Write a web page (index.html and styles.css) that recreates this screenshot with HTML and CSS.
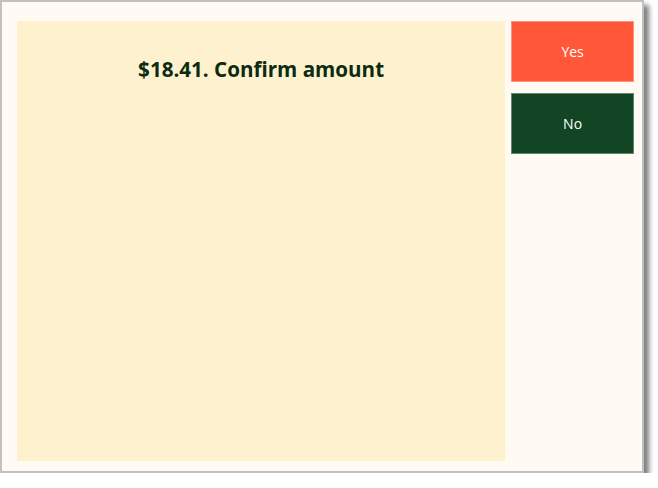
FILE: index.html
```html
<!DOCTYPE html>
<html>
<head>
    <meta charset="utf-8">
    <title>Confirm amount</title>
    <link rel="stylesheet" href="styles.css">
</head>
<body>
    <div class="window">
        <div class="prompt-panel">
            <h1 class="prompt-title">$18.41. Confirm amount</h1>
        </div>
        <div class="button-column">
            <button class="choice choice-yes">Yes</button>
            <button class="choice choice-no">No</button>
        </div>
    </div>
</body>
</html>
```

FILE: styles.css
```css
body {
    margin: 0;
    background-color: #ffffff;
    font-family: "Open Sans", "Noto Sans", sans-serif;
}

/* Outer dialog frame */
.window {
    box-sizing: border-box;
    width: 644px;
    height: 473px;
    border: 2px solid #c3c1bf;
    background-color: #fffaf3;
    box-shadow: 5px 5px 5px rgba(0, 0, 0, 0.5);
    display: flex;
    padding: 19px 8px 10px 15px;
    gap: 6px;
}

.prompt-panel {
    width: 489px;
    background-color: #fef1cd;
    text-align: center;
}

.prompt-title {
    margin: 34px 0 0 0;
    font-size: 20.6px;
    font-weight: bold;
    color: #0d2a12;
}

.button-column {
    display: flex;
    flex-direction: column;
    gap: 11px;
    width: 123px;
}

.choice {
    height: 61px;
    border: 1px solid rgba(255, 255, 255, 0.35);
    color: #ffffff;
    font-family: "Open Sans", "Noto Sans", sans-serif;
    font-size: 14px;
    padding: 0;
}

.choice-yes {
    background-color: #ff5737;
}

.choice-no {
    background-color: #114523;
}
```
